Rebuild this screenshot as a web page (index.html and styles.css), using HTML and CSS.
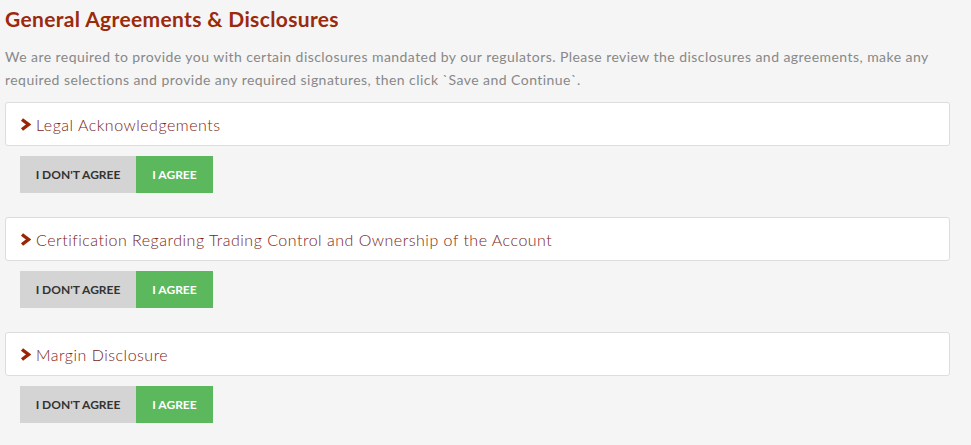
FILE: index.html
```html
<!DOCTYPE html>
<html lang="en">
<head>
    <meta charset="UTF-8">
    <title>General Agreements &amp; Disclosures</title>
    <link rel="stylesheet" href="styles.css">
</head>
<body>
    <div class="page">
        <h1>General Agreements &amp; Disclosures</h1>
        <p class="intro">We are required to provide you with certain disclosures mandated by our regulators. Please review the disclosures and agreements, make any required selections and provide any required signatures, then click `Save and Continue`.</p>

        <div class="agreement">
            <div class="panel">
                <span class="chevron">
                    <svg width="11" height="13" viewBox="0 0 11 13"><path d="M2 1.5 L8.5 6.5 L2 11.5" fill="none" stroke="#9b2306" stroke-width="3.4"/></svg>
                </span>
                <span class="panel-title">Legal Acknowledgements</span>
            </div>
            <div class="choices">
                <button class="btn btn-disagree">I Don't Agree</button>
                <button class="btn btn-agree">I Agree</button>
            </div>
        </div>

        <div class="agreement">
            <div class="panel">
                <span class="chevron">
                    <svg width="11" height="13" viewBox="0 0 11 13"><path d="M2 1.5 L8.5 6.5 L2 11.5" fill="none" stroke="#9b2306" stroke-width="3.4"/></svg>
                </span>
                <span class="panel-title">Certification Regarding Trading Control and Ownership of the Account</span>
            </div>
            <div class="choices">
                <button class="btn btn-disagree">I Don't Agree</button>
                <button class="btn btn-agree">I Agree</button>
            </div>
        </div>

        <div class="agreement">
            <div class="panel">
                <span class="chevron">
                    <svg width="11" height="13" viewBox="0 0 11 13"><path d="M2 1.5 L8.5 6.5 L2 11.5" fill="none" stroke="#9b2306" stroke-width="3.4"/></svg>
                </span>
                <span class="panel-title">Margin Disclosure</span>
            </div>
            <div class="choices">
                <button class="btn btn-disagree">I Don't Agree</button>
                <button class="btn btn-agree">I Agree</button>
            </div>
        </div>
    </div>
</body>
</html>
```

FILE: styles.css
```css
body {
    margin: 0;
    background-color: #f5f5f5;
    font-family: Lato, "Open Sans", sans-serif;
}
.page {
    width: 945px;
    padding: 6px 0 0 5px;
}
h1 {
    margin: 0 0 14px;
    font-size: 21px;
    font-weight: 700;
    color: #9b2a0c;
    letter-spacing: 0.35px;
}
.intro {
    margin: 0 0 11px;
    font-size: 14px;
    line-height: 23px;
    color: #888888;
    letter-spacing: 0.45px;
}
.agreement {
    margin-bottom: 24px;
}
.panel {
    display: flex;
    align-items: center;
    height: 42px;
    padding: 0 14px;
    background: white;
    border: 1px solid #dddddd;
    border-radius: 3px;
}
.chevron {
    display: flex;
    margin-right: 5px;
}
.panel-title {
    font-size: 16px;
    font-weight: 300;
    color: #7a2416;
    letter-spacing: 0.5px;
}
.choices {
    display: flex;
    margin: 10px 0 0 15px;
}
.btn {
    height: 37px;
    border: none;
    border-radius: 0;
    font-family: Lato, sans-serif;
    font-size: 12px;
    font-weight: 700;
    text-transform: uppercase;
    cursor: pointer;
}
.btn-disagree {
    width: 116px;
    background-color: #d4d4d4;
    color: #333333;
}
.btn-agree {
    width: 77px;
    background-color: #5cb85c;
    color: white;
}
.btn-agree:hover {
    background-color: #4cae4c;
}
```
